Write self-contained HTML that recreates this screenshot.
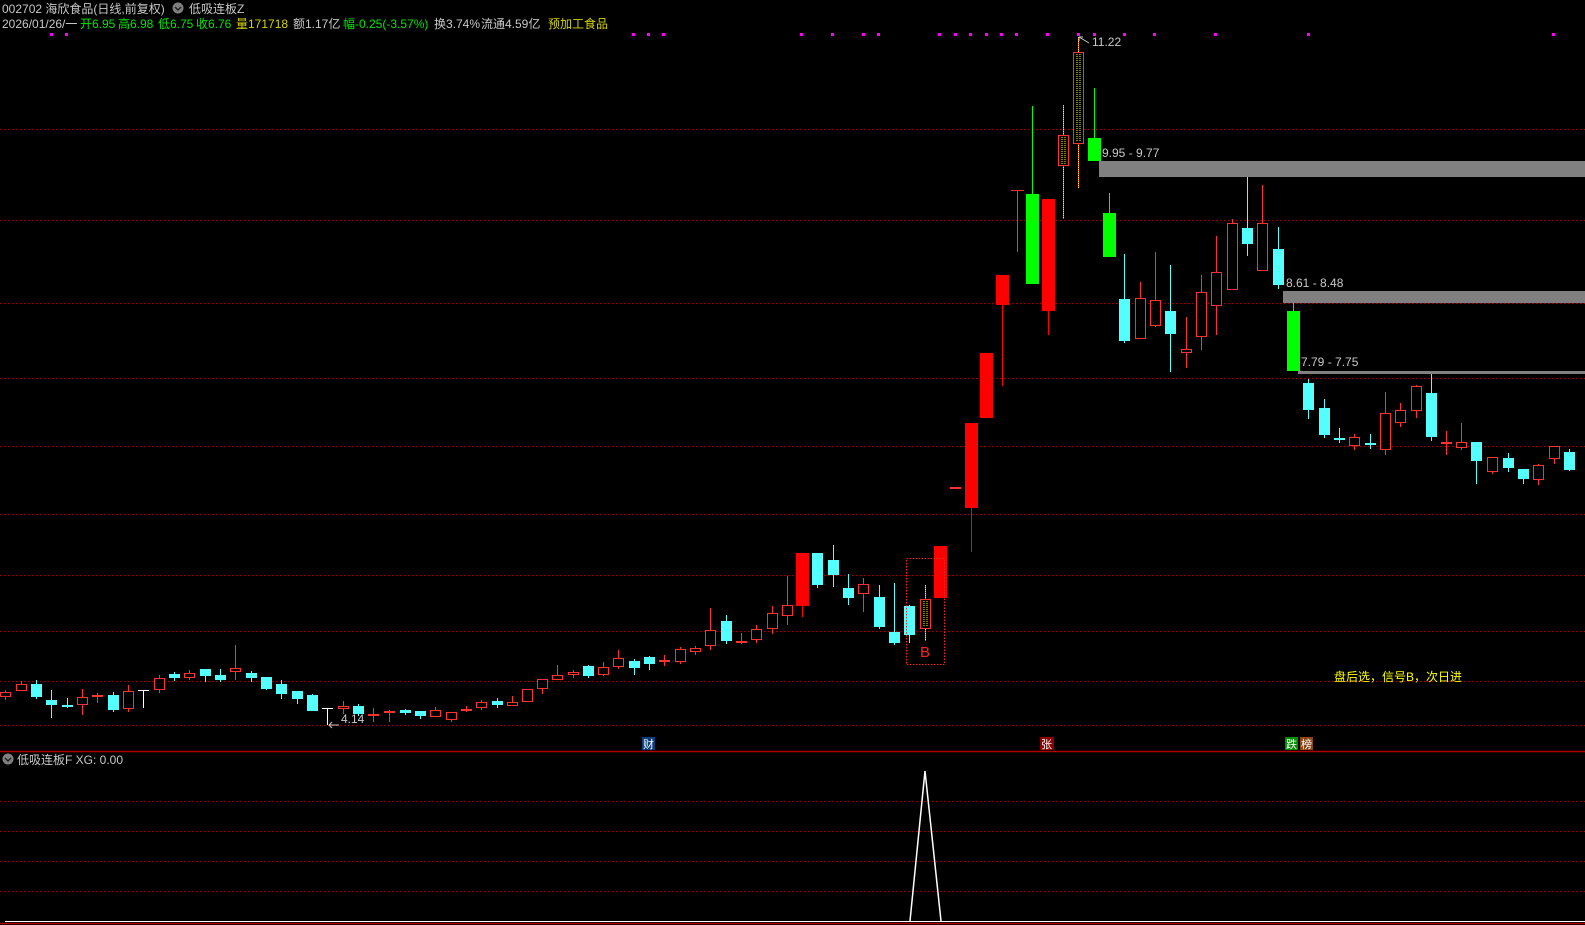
<!DOCTYPE html>
<html><head><meta charset="utf-8">
<style>
html,body{margin:0;padding:0;background:#000;width:1585px;height:925px;overflow:hidden}
svg{display:block}
text{font-family:"Liberation Sans","Noto Sans CJK SC",sans-serif;font-size:12px}
</style></head><body>
<svg id="s" width="1585" height="925" viewBox="0 0 1585 925" xmlns="http://www.w3.org/2000/svg">
<rect width="1585" height="925" fill="#000"/>
<g id="grid" stroke="#b00000" stroke-width="1" stroke-dasharray="1.5 2.5">
<line x1="0" y1="129.5" x2="1585" y2="129.5"/>
<line x1="0" y1="220.5" x2="1585" y2="220.5"/>
<line x1="0" y1="303.5" x2="1585" y2="303.5"/>
<line x1="0" y1="378.5" x2="1585" y2="378.5"/>
<line x1="0" y1="446.5" x2="1585" y2="446.5"/>
<line x1="0" y1="514.5" x2="1585" y2="514.5"/>
<line x1="0" y1="575.5" x2="1585" y2="575.5"/>
<line x1="0" y1="631.5" x2="1585" y2="631.5"/>
<line x1="0" y1="681.5" x2="1585" y2="681.5"/>
<line x1="0" y1="725.5" x2="1585" y2="725.5"/>
<line x1="0" y1="801.5" x2="1585" y2="801.5"/>
<line x1="0" y1="831.5" x2="1585" y2="831.5"/>
<line x1="0" y1="861.5" x2="1585" y2="861.5"/>
<line x1="0" y1="891.5" x2="1585" y2="891.5"/>
</g>
<!-- grey resistance bars -->
<rect x="1099" y="161" width="486" height="16" fill="#808080"/>
<rect x="1283" y="291" width="302" height="12" fill="#808080"/>
<rect x="1298" y="371" width="287" height="3" fill="#808080"/>
<text x="1102" y="157" fill="#c8c8c8">9.95 - 9.77</text>
<text x="1286" y="287" fill="#c8c8c8">8.61 - 8.48</text>
<text x="1301" y="366" fill="#c8c8c8">7.79 - 7.75</text>
<g id="candles"></g>
<!-- B box -->
<rect x="906.5" y="558.5" width="38" height="106" fill="none" stroke="#ff2020" stroke-dasharray="1.5 1.5"/>
<text x="920" y="657" fill="#ff2020" style="font-size:15px">B</text>
<!-- labels -->
<text x="1092" y="46" fill="#c8c8c8">11.22</text>
<path d="M1079 37 L1089 43 M1079 37 L1079 41 M1079 37 L1083 37" stroke="#c8c8c8" fill="none"/>
<text x="341" y="723" fill="#c8c8c8">4.14</text>
<path d="M329 725 L339 725 M329 725 L332 722 M329 725 L332 728" stroke="#c8c8c8" fill="none"/>
<text x="1334" y="681" fill="#ffff00">盘后选，信号B，次日进</text>
<!-- magenta dots -->
<g fill="#ff00ff" id="dots"></g>
<!-- x-axis markers -->
<rect x="642" y="737" width="13" height="13" fill="#0a3c78"/><text x="643" y="748" fill="#fff" style="font-size:11px">财</text>
<rect x="1040" y="737" width="14" height="13" fill="#8b0000"/><text x="1041" y="748" fill="#fff" style="font-size:11px">张</text>
<rect x="1285" y="737" width="13" height="13" fill="#008c00"/><text x="1286" y="748" fill="#fff" style="font-size:11px">跌</text>
<rect x="1300" y="737" width="13" height="13" fill="#8b4513"/><text x="1301" y="748" fill="#fff" style="font-size:11px">榜</text>
<!-- separators -->
<line x1="0" y1="751.5" x2="1585" y2="751.5" stroke="#b00000" stroke-width="1.5"/>
<line x1="5" y1="921.5" x2="1585" y2="921.5" stroke="#fff" stroke-width="1"/>
<line x1="0" y1="923.5" x2="1585" y2="923.5" stroke="#b00000" stroke-width="1.5"/>
<polyline points="910,921 925,771 941,921" fill="none" stroke="#fff" stroke-width="1.5"/>
<!-- header -->
<text x="2" y="13" fill="#c8c8c8">002702 海欣食品(日线,前复权)</text>
<circle cx="178" cy="8" r="5.5" fill="#808080"/><path d="M175 7 L178 10 L181 7" stroke="#222" stroke-width="1.5" fill="none"/>
<text x="189" y="13" fill="#c8c8c8">低吸连板Z</text>
<text x="2" y="28" fill="#c8c8c8">2026/01/26/一</text>
<text x="80" y="28" fill="#00e600">开6.95</text>
<text x="118" y="28" fill="#00e600">高6.98</text>
<text x="158" y="28" fill="#00e600">低6.75</text>
<text x="196" y="28" fill="#00e600">收6.76</text>
<text x="236" y="28" fill="#d4d400">量171718</text>
<text x="293" y="28" fill="#c8c8c8">额1.17亿</text>
<text x="343" y="28" fill="#00e600">幅-0.25(-3.57%)</text>
<text x="434" y="28" fill="#c8c8c8">换3.74%</text>
<text x="481" y="28" fill="#c8c8c8">流通4.59亿</text>
<text x="548" y="28" fill="#d4d400">预加工食品</text>
<!-- lower panel label -->
<circle cx="8" cy="759" r="5.5" fill="#808080"/><path d="M5 758 L8 761 L11 758" stroke="#222" stroke-width="1.5" fill="none"/>
<text x="17" y="764" fill="#c8c8c8">低吸连板F  XG: 0.00</text>
</svg>
<script>
(function(){
var C=[
[5,692,697,690,700,'r'],[21,684,691,681,691,'r'],[36,684,697,680,699,'c'],[51,700,705,690,718,'c'],[67,705,707,698,708,'c'],
[82,697,705,689,715,'r'],[97,695,697,693,703,'R'],[113,695,710,692,712,'c'],[128,691,709,685,712,'r'],[143,690,691,690,708,'w'],
[159,678,690,675,693,'r'],[174,674,678,672,681,'c'],[189,673,678,670,680,'r'],[205,669,676,669,682,'c'],[220,675,680,669,682,'c'],
[235,668,672,645,680,'r'],[251,673,678,671,682,'c'],[266,677,689,677,690,'c'],[281,684,694,680,699,'c'],[297,691,699,691,704,'c'],
[312,695,711,694,711,'c'],[327,708,709,708,725,'w'],[343,706,709,701,714,'r'],[358,706,714,704,716,'c'],[373,714,715,708,722,'R'],
[389,711,713,710,722,'r'],[405,710,713,709,715,'c'],[420,711,716,711,719,'c'],[435,710,717,707,717,'r'],[451,712,720,712,722,'r'],
[466,709,711,706,712,'R'],[481,702,708,700,710,'r'],[497,701,705,698,708,'c'],[512,702,706,696,706,'r'],[527,689,702,689,702,'r'],
[542,679,689,679,694,'r'],[557,675,680,665,680,'r'],[573,672,675,670,678,'r'],[588,666,676,665,678,'c'],[603,667,675,662,676,'r'],
[618,658,667,650,669,'r'],[634,661,668,659,675,'c'],[649,657,664,656,670,'c'],[664,660,662,655,666,'R'],[680,649,662,647,664,'r'],
[695,648,652,646,655,'r'],[710,630,646,608,650,'r'],[726,621,641,615,644,'c'],[741,641,643,633,644,'R'],[756,629,640,625,643,'r'],
[772,613,629,606,634,'r'],[787,605,616,576,625,'r'],[802,553,606,553,617,'RB'],[817,553,585,553,588,'c'],[833,560,575,545,587,'c'],
[848,588,598,574,605,'c'],[863,584,594,578,612,'r'],[879,597,627,585,629,'c'],[894,632,643,583,645,'c'],[909,606,635,605,643,'c'],
[925,599,629,585,641,'ry'],[940,546,598,546,598,'RB'],[955,487,489,488,488,'R'],[971,423,508,423,552,'RB'],[986,353,418,353,418,'RB'],
[1002,275,305,275,386,'RB'],[1017,189,191,190,252,'T'],[1032,194,284,106,284,'gB'],[1048,199,311,199,335,'RB'],[1063,135,166,105,219,'ry'],
[1078,52,144,37,188,'ry'],[1094,138,161,88,161,'gB'],[1109,213,257,193,257,'gB'],[1124,299,341,254,343,'c'],[1140,298,339,282,339,'r'],
[1155,300,326,252,327,'r'],[1170,311,334,265,372,'c'],[1186,349,353,317,368,'r'],[1201,292,337,275,350,'r'],[1216,272,306,236,335,'r'],
[1232,223,290,219,290,'r'],[1247,228,244,177,256,'c'],[1262,223,271,185,271,'r'],[1278,249,285,227,289,'c'],[1293,311,371,303,371,'gB'],
[1308,383,410,379,419,'c'],[1324,408,435,399,438,'c'],[1339,438,440,428,443,'c'],[1354,437,446,434,450,'r'],[1370,443,445,434,449,'c'],
[1385,413,450,392,455,'r'],[1400,410,423,403,427,'r'],[1416,386,411,385,418,'r'],[1431,393,437,374,441,'c'],[1446,442,444,431,455,'r'],
[1461,442,448,423,450,'r'],[1476,442,461,442,484,'c'],[1492,457,472,457,474,'r'],[1508,458,468,453,472,'c'],[1523,469,479,469,484,'c'],
[1538,465,480,464,485,'r'],[1554,446,459,446,464,'r'],[1569,452,470,449,471,'c']];
var h='';var RED='#ff3232',CY='#54ffff',GR='#00ff00';
C.forEach(function(d){var x=d[0],bt=d[1],bb=d[2],hi=d[3],lo=d[4],t=d[5];var xc=x+0.5;
 if(t==='w'){h+='<line x1="'+xc+'" y1="'+hi+'" x2="'+xc+'" y2="'+lo+'" stroke="#fff"/><line x1="'+(x-5)+'" y1="'+(bt+0.5)+'" x2="'+(x+6)+'" y2="'+(bt+0.5)+'" stroke="#fff"/>';return;}
 if(t==='T'){h+='<line x1="'+xc+'" y1="'+hi+'" x2="'+xc+'" y2="'+lo+'" stroke="'+RED+'"/><line x1="'+(x-6)+'" y1="190.5" x2="'+(x+7)+'" y2="190.5" stroke="'+RED+'"/>';return;}
 var big=t.indexOf('B')>=0;var w=big?13:11;var col=t[0]==='c'?CY:(t[0]==='g'?GR:RED);
 if(t[0]==='R'&&big)col='#ff0000';
 h+='<line x1="'+xc+'" y1="'+hi+'" x2="'+xc+'" y2="'+lo+'" stroke="'+col+'"/>';
 if(t.indexOf('y')>=0)h+='<line x1="'+xc+'" y1="'+hi+'" x2="'+xc+'" y2="'+lo+'" stroke="#ffff00" stroke-dasharray="1 1"/>';
 var bh=Math.max(bb-bt,2);
 if(t[0]==='r'){h+='<rect x="'+(x-4.5)+'" y="'+(bt+0.5)+'" width="10" height="'+(bh-1)+'" fill="#000" stroke="'+RED+'"/>';
   if(t.indexOf('y')>=0){h+='<line x1="'+(x-1)+'" y1="'+(bt+2)+'" x2="'+(x-1)+'" y2="'+(bb-2)+'" stroke="#ffff00" stroke-dasharray="1 1"/><line x1="'+(x+2)+'" y1="'+(bt+2)+'" x2="'+(x+2)+'" y2="'+(bb-2)+'" stroke="#ffff00" stroke-dasharray="1 1"/>';}}
 else h+='<rect x="'+(x-Math.floor(w/2))+'" y="'+bt+'" width="'+w+'" height="'+bh+'" fill="'+col+'"/>';
});
document.getElementById('candles').innerHTML=h;
var D=[51,66,633,648,663,801,832,863,878,939,955,970,986,1001,1016,1047,1078,1094,1124,1154,1215,1308,1553],g='';
D.forEach(function(x){g+='<rect x="'+(x-1)+'" y="33" width="3" height="3"/>';});
document.getElementById('dots').innerHTML=g;
})();
</script>
</body></html>
